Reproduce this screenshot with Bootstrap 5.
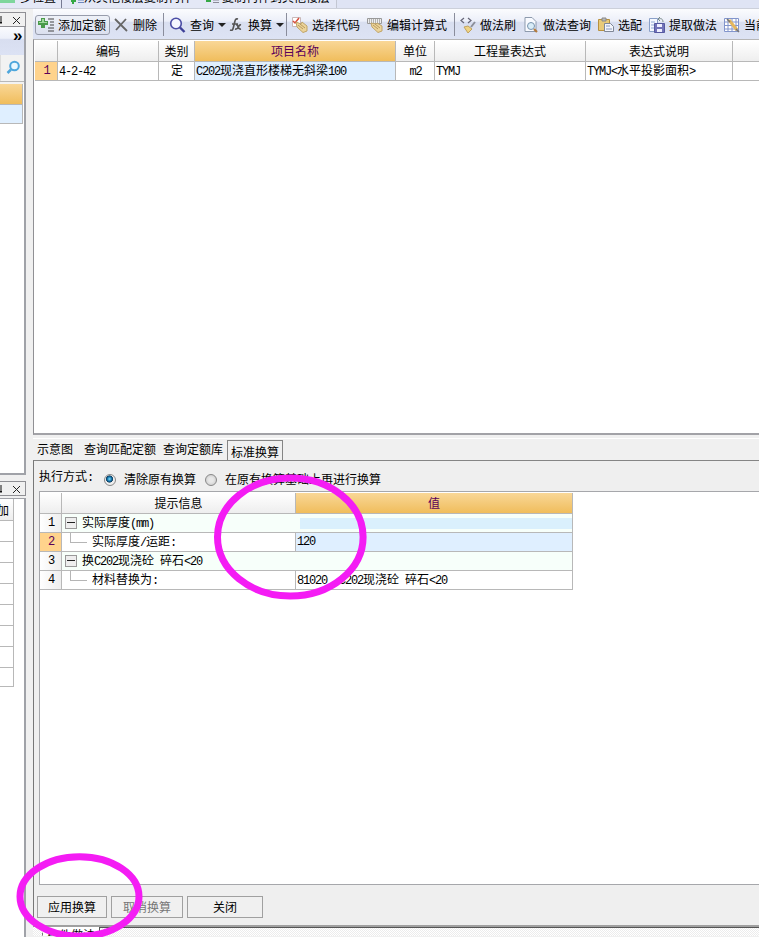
<!DOCTYPE html>
<html lang="zh-CN">
<head>
<meta charset="utf-8">
<title>标准换算</title>
<link href="https://cdn.jsdelivr.net/npm/bootstrap@5.3.0/dist/css/bootstrap.min.css" rel="stylesheet">
<style>
html,body{height:937px;overflow:hidden}
body{font:12px/16px "Liberation Sans","Noto Sans CJK SC",sans-serif;color:#000;background:#f0f0f0;white-space:nowrap}
svg{display:block;flex:none}
.lat{font-family:"Liberation Mono","Noto Sans CJK SC",monospace;letter-spacing:-1.2px}
.zh{letter-spacing:0}
.app{width:759px;height:937px}
.topstrip{height:9px;background:#dfe4f4;border-bottom:1px solid #ccd0da}
.topstrip .grp{height:8px;background:#e4e8f6}
.topstrip .cut{height:16px;margin-top:-10px}
.g1{width:62px;border-right:1px solid #777b92;padding-left:20px}
.g2{width:275px;border-right:1px solid #c3c7d2}
.side{width:26px;flex:none;padding-top:3px}
.dock{height:15px;border:1px solid #8f8f94;border-left:0;background:#f0f0f0}
.side-panel{border-right:2px solid #a0a2a8;border-bottom:2px solid #a0a2a8;background:#fff}
.chev{height:28px;background:linear-gradient(#fafbfe 0,#edf0fa 40%,#d8def0 45%,#dce2f4);font-size:17px;line-height:18px;font-weight:bold;padding-left:13px}
.find{height:26px;background:#f2f2f2;border-left:1px solid #ddd;padding:5px 0 0 5px}
.amber{background:linear-gradient(#f9d797,#f0bd5c)}
.cell-l{border-right:1px solid #b8b8b8;border-bottom:1px solid #b8b8b8;width:23px}
.sg{width:14px}
.sg>div{height:21px;border-right:1px solid #b8b8b8;border-bottom:1px solid #b8b8b8}
.main{width:726px;margin-left:7px}
.tools{height:30px;display:grid;grid-template-columns:79px 51px 65px 58px 80px 88px 68px 74px 52px 74px 37px;background:linear-gradient(#fbfcfe 0,#eceff9 40%,#d9dff0 45%,#dde3f4);overflow:hidden}
.tool{display:flex;align-items:center;gap:4px;height:31px}
.tool span{padding-top:2px}
.p1{padding-left:1px}.p2{padding-left:2px}
.sep{border-left:1px solid #8a8d9c;padding-left:5px;height:23px;margin-top:4px}
.addbtn{margin:6px 0 0 2px;width:75px;height:20px;border:1px solid #979cab;border-radius:3px;padding-left:2px;background:linear-gradient(#eef1f8,#dbe0ef)}
.caret{width:0;height:0;border:4px solid transparent;border-top:4px solid #222;border-bottom:0}
.top-grid{height:396px;background:#fff;border-left:1px solid #909094;border-top:1px solid #b6b6b6;border-bottom:2px solid #a2a2a7;padding:1px 0 0 1px;overflow:hidden}
.r1,.r2{display:grid}
.r1{grid-template-columns:23px 101px 36px 201px 39px 151px 147px 40px}
.r2{grid-template-columns:22px 234px 277px}
.r1>div,.r2>div{height:19px;border-right:1px solid #b8b8b8;border-bottom:1px solid #b8b8b8;line-height:20px;padding-left:1px;overflow:hidden}
.r2>div{line-height:21px}
.hd>div{background:linear-gradient(#fff,#eee);height:21px;line-height:22px;text-align:center;padding:0}
.hd>div.amber{background:linear-gradient(#f9d797,#f0bd5c)}
.r1>.num,.r2>.num{background:linear-gradient(90deg,#fff,#eee);text-align:center;padding:0 0 0 1px;line-height:19px}
.r1>.cur,.r2>.cur{background:#ffd38c;color:#5a005a}
.purple{color:#5a005a}
.r1>.sel,.r2>.sel{background:#dfefff}
.r2>.val{line-height:19px}
.tabs{height:22px;border-top:1px solid #fff;margin-top:3px;padding-left:4px}
.tabs span{padding-top:3px}
.tabs .on{width:56px;height:20px;margin-top:1px;border:1px solid #858585;border-bottom:0;padding:4px 0 0 3px;margin-left:4px}
.conv{height:465px;border-left:1px solid #777;border-top:1px solid #858585;background:#efefef}
.mode{height:30px;padding-left:5px}
.radio{width:12px;height:12px;border:1px solid #888;border-radius:50%;background:radial-gradient(#e8e8e8 30%,#c5c5c5);margin-top:13px}
.radio.on{background:radial-gradient(circle at 45% 40%,#7fe0ff 0,#0c6ca5 28%,#123d5c 40%,#eee 48%)}
.conv-grid{height:394px;margin-left:5px;border:1px solid #a6a7ab;border-right:0;background:#fff;padding:1px 0 0 0}
.r2>.grpc{background:#f7fffa;grid-column:span 2;display:flex}
.pm{width:12px;height:12px;border:1px solid #999;background:#eee;margin:3px 5px 0 2px;flex:none;padding:4px 1px}
.pm i{display:block;height:1px;background:#222;width:8px}
.branch{display:inline-block;width:17px;height:10px;border-left:1px solid #b5b5b5;border-bottom:1px solid #b5b5b5;margin:0 5px 0 7px;vertical-align:top}
.bar{height:11px;background:#daf0fd;width:273px;margin-top:4px}
.btns{padding:11px 0 0 3px}
.ubtn{height:22px;border:1px solid #a0a0a0;background:#f0f0f0;text-align:center;line-height:22px}
.foot{height:11px;border-top:2px solid #a0a0a0;background:repeating-conic-gradient(#fff 0 25%,#ececec 0 50%) 0 0/2px 2px}
.foot .ftab{margin-left:9px;width:58px;height:20px;background:#fff;border-left:1px dashed #777;border-right:1px solid #555;padding:1px 0 0 4px;overflow:hidden}
.foot .rest{border-top:1px solid #555}
.marks{left:0;top:0;pointer-events:none}
</style>
<script src="https://cdn.jsdelivr.net/npm/bootstrap@5.3.0/dist/js/bootstrap.bundle.min.js"></script>
</head>
<body>
<div class="app position-relative overflow-hidden">
<div class="topstrip d-flex overflow-hidden">
  <div class="grp g1 d-flex overflow-hidden position-relative"><svg class="position-absolute start-0 top-0" width="15" height="3"><path d="M0 0h15v3H0z" fill="#7ed69c"/></svg><span class="cut">多位置</span></div>
  <div class="grp g2 d-flex overflow-hidden"><svg width="22" height="6"><path d="M9 0h5v2h-2v2h-2V2H9z" fill="#35a845"/><path d="M16 0h6M16 2.500h6" stroke="#6d88bd"/></svg><span class="cut">从其他楼层复制构件</span><svg width="30" height="6"><path d="M14 0h5v2h-5z" fill="#35a845"/><path d="M21 0h6M21 2.500h6" stroke="#8a8a96"/></svg><span class="cut">复制构件到其他楼层</span></div>
</div>
<div class="d-flex">
  <div class="side">
      <div class="dock"><svg width="25" height="13"><path d="M1 3v8M0 9.500h2" stroke="#111"/><path d="M13 4l7 7M20 4l-7 7" stroke="#222"/></svg></div>
      <div class="side-panel" style="height:448px">
        <div class="chev">»</div>
        <div class="find"><svg width="16" height="16" viewBox="0 0 16 16"><circle cx="8.500" cy="6" r="4.300" fill="#e8f7ff" stroke="#4da6dc" stroke-width="2"/><path d="M5 9.500L1.500 13" stroke="#4da6dc" stroke-width="2.500"/></svg></div>
        <div style="height:3px;background:#f2f2f2;border-top:1px solid #b8b8b8"></div>
        <div class="cell-l amber" style="height:21px"></div>
        <div class="cell-l" style="height:19px;background:#dfefff"></div>
      </div>
      <div class="dock" style="margin-top:6px"><svg width="25" height="13"><path d="M1 3v8M0 9.500h2" stroke="#111"/><path d="M13 4l7 7M20 4l-7 7" stroke="#222"/></svg></div>
      <div class="side-panel" style="margin-top:2px;height:445px;border-top:1px solid #a0a2a8;border-bottom:0">
        <div class="sg"><div style="height:22px;padding-top:4px;background:linear-gradient(#fff,#eee);overflow:hidden;text-indent:-3px">加</div><div></div><div></div><div></div><div></div><div></div><div></div><div></div><div style="height:19px"></div></div>
      </div>
  </div>
  <div class="main">
    <div class="tools">
      <div class="tool addbtn"><svg width="16" height="16"><path d="M3 1h4v3h3v4H7v3H3V8H0V4h3z" fill="#4b9b4b"/><path d="M4 2h2v3h3v1H4V6H1V5h3z" fill="#a0d89d"/><path d="M10 2h6M12 5h4M12 8h4M10 11h6M10 14h6" stroke="#444" stroke-width="1.200"/></svg><span>添加定额</span></div>
      <div class="tool p1"><svg width="16" height="16"><path d="M2 2l12 12M13 2L3 13" stroke="#666" stroke-width="1.800"/></svg><span>删除</span></div>
      <div class="tool sep"><svg width="17" height="16"><circle cx="7" cy="6.500" r="5.300" fill="#f5f7ff" stroke="#4b4da5" stroke-width="1.600"/><path d="M11 10.500l4.500 4.500" stroke="#3d3f98" stroke-width="2.400"/></svg><span>查询</span><i class="caret"></i></div>
      <div class="tool"><svg width="16" height="16"><path d="M10 2C7 1 7 4 6 8s-1 6-4 5M4 7h6M8 8c3-1 1 5 5 4M13 8c-3-1-2 5-6 4" fill="none" stroke="#555" stroke-width="1.700"/></svg><span>换算</span><i class="caret"></i></div>
      <div class="tool sep"><svg width="16" height="16"><path d="M.5.500h8v9h-8z" fill="#fff" stroke="#c8b8b8"/><path d="M1 4l2 2 4-5" fill="none" stroke="#d84b3a" stroke-width="1.500"/><path d="M4 5l5 2 1-2 5 4v5l-4 1.500L5 10z" fill="#ecd49a" stroke="#c0a468"/><path d="M6 8l5 4M8 7l5 4" stroke="#b8995c"/></svg><span>选择代码</span></div>
      <div class="tool p1"><svg width="16" height="16"><path d="M.5 1.500h14v5H.5z" fill="#eee" stroke="#999"/><path d="M2 3h12M2 5h12" stroke="#777" stroke-dasharray="1 1"/><path d="M4 6l5 1 1-1 5 3v5l-4 1.500L5 10z" fill="#ecd49a" stroke="#c0a468"/><path d="M6 8l5 4M8 7l5 4" stroke="#b8995c"/></svg><span>编辑计算式</span></div>
      <div class="tool sep"><svg width="16" height="16"><path d="M4 1L1 3.500 4 6M8 1l3 2.500L8 6" fill="none" stroke="#667" stroke-width="1.200"/><path d="M15 5l-4 5" stroke="#8b8e98" stroke-width="2"/><path d="M4 10l4-1 4 3-4 4z" fill="#efd383" stroke="#c0a25f"/></svg><span>做法刷</span></div>
      <div class="tool p1"><svg width="16" height="16"><path d="M2 .5h7l4 4v10H2z" fill="#f8faff" stroke="#8d9aad"/><circle cx="8" cy="9" r="3.500" fill="#d9edf8" stroke="#7994ae"/><path d="M11 12l3 3" stroke="#b47b3c" stroke-width="2.200"/></svg><span>做法查询</span></div>
      <div class="tool p2"><svg width="16" height="16"><path d="M.5 2.500h11v11H.5z" fill="#e8ca78" stroke="#b8913e"/><path d="M4 1h4v3H4z" fill="#bbb" stroke="#888"/><path d="M6.500 6.500h6l3 3v5h-9z" fill="#f3f5fc" stroke="#7f8796"/><path d="M8 9h4M8 12h6" stroke="#8899bb"/></svg><span>选配</span></div>
      <div class="tool p1"><svg width="16" height="16"><path d="M.5 1.500h8v13h-8z" fill="#f5f8ff" stroke="#8aa0c8"/><path d="M2 5h4M2 8h3M2 11h3" stroke="#91a9d4"/><path d="M5.500 6.500h10v9h-10z" fill="#7273b9" stroke="#5558a0"/><path d="M8 7h5v3H8zM8 12h5v3H8z" fill="#eef"/><path d="M14 5c0-3-2-4-4-3m1-2L9 2l2 2" fill="none" stroke="#778888"/></svg><span>提取做法</span></div>
      <div class="tool p2"><svg width="16" height="16"><path d="M.5 1.500h14v13H.5zM.5 5h14M.5 8.500h14M.5 12h14M4 2v12M8 2v12M12 2v12" fill="#fff" stroke="#8295cc"/><path d="M5 3l8 10" stroke="#e5b75d" stroke-width="3"/><path d="M3 2l3 3M12 12l3 3" stroke="#777" stroke-width="1.500"/></svg><span>当前</span></div>
    </div>
    <div class="top-grid">
      <div class="r1 hd"><div></div><div>编码</div><div>类别</div><div class="amber purple">项目名称</div><div>单位</div><div>工程量表达式</div><div>表达式说明</div><div></div></div>
      <div class="r1 lat"><div class="num cur">1</div><div>4-2-42</div><div class="text-center zh">定</div><div class="sel">C202<span class="zh">现浇直形楼梯无斜梁</span>100</div><div class="text-center">m2</div><div>TYMJ</div><div>TYMJ&lt;<span class="zh">水平投影面积</span>&gt;</div><div></div></div>
    </div>
    <div class="tabs d-flex"><span>示意图</span><span style="margin-left:11px">查询匹配定额</span><span style="margin-left:7px">查询定额库</span><span class="on">标准换算</span></div>
    <div class="conv">
      <div class="mode d-flex"><span class="lat" style="padding-top:9px;width:65px"><span class="zh">执行方式</span>:</span><i class="radio on"></i><span style="padding:11px 0 0 8px;width:89px">清除原有换算</span><i class="radio"></i><span style="padding:11px 0 0 8px">在原有换算基础上再进行换算</span></div>
      <div class="conv-grid">
        <div class="r2 hd"><div>&nbsp;</div><div>提示信息</div><div class="amber purple">值</div></div>
        <div class="r2 lat"><div class="num">1</div><div class="grpc"><i class="pm"><i></i></i><span style="width:218px"><span class="zh">实际厚度</span>(mm)</span><i class="bar"></i></div></div>
        <div class="r2 lat"><div class="num cur">2</div><div><i class="branch"></i><span class="zh">实际厚度</span>/<span class="zh">运距</span>:</div><div class="sel val">120</div></div>
        <div class="r2 lat"><div class="num">3</div><div class="grpc"><i class="pm"><i></i></i><span><span class="zh">换</span>C202<span class="zh">现浇砼</span> <span class="zh">碎石</span>&lt;20</span></div></div>
        <div class="r2 lat"><div class="num">4</div><div><i class="branch"></i><span class="zh">材料替换为</span>:</div><div>81020&nbsp; C202<span class="zh">现浇砼</span> <span class="zh">碎石</span>&lt;20</div></div>
      </div>
      <div class="btns d-flex"><div class="ubtn" style="width:70px">应用换算</div><div class="ubtn" style="width:72px;margin-left:4px;color:#777">取消换算</div><div class="ubtn" style="width:76px;margin-left:4px">关闭</div></div>
    </div>
    <div class="foot d-flex overflow-hidden"><div class="ftab">构件做法</div><div class="rest flex-fill"></div></div>
  </div>
</div>
<svg class="marks position-absolute" width="759" height="937"><g fill="none" stroke="#f41cf4" stroke-width="7"><ellipse cx="290.300" cy="537" rx="72.800" ry="59"/><ellipse cx="79.500" cy="896.500" rx="59.500" ry="39.800"/></g></svg>
</div>
</body>
</html>
